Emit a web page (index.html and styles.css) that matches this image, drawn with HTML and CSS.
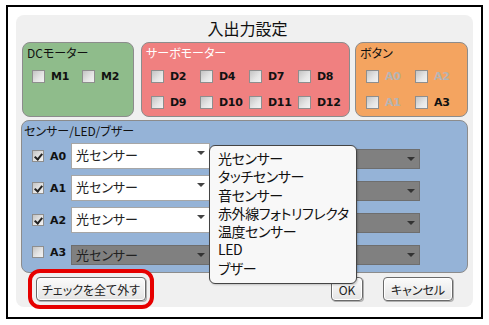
FILE: index.html
```html
<!DOCTYPE html>
<html lang="ja">
<head>
    <meta charset="UTF-8">
    <title>入出力設定</title>
    <link rel="stylesheet" href="styles.css">
</head>
<body>
    <div class="frame">
        <div class="panel">
            <h1 class="title">入出力設定</h1>

            <div class="groups">
                <section class="group group-dc">
                    <div class="group-title">DCモーター</div>
                    <div class="checks">
                        <label class="chk"><span class="box"></span>M1</label>
                        <label class="chk"><span class="box"></span>M2</label>
                    </div>
                </section>

                <section class="group group-servo">
                    <div class="group-title light">サーボモーター</div>
                    <div class="checks">
                        <label class="chk"><span class="box"></span>D2</label>
                        <label class="chk"><span class="box"></span>D4</label>
                        <label class="chk"><span class="box"></span>D7</label>
                        <label class="chk"><span class="box"></span>D8</label>
                        <label class="chk"><span class="box"></span>D9</label>
                        <label class="chk"><span class="box"></span>D10</label>
                        <label class="chk"><span class="box"></span>D11</label>
                        <label class="chk"><span class="box"></span>D12</label>
                    </div>
                </section>

                <section class="group group-button">
                    <div class="group-title">ボタン</div>
                    <div class="checks">
                        <label class="chk disabled"><span class="box"></span>A0</label>
                        <label class="chk disabled"><span class="box"></span>A2</label>
                        <label class="chk disabled"><span class="box"></span>A1</label>
                        <label class="chk"><span class="box"></span>A3</label>
                    </div>
                </section>
            </div>

            <section class="sensors">
                <div class="group-title">センサー/LED/ブザー</div>

                <div class="sensor-row">
                    <span class="box checked"></span>
                    <span class="pin">A0</span>
                    <div class="select open">光センサー<span class="arrow"></span></div>
                    <div class="select off wide"><span class="arrow"></span></div>
                </div>
                <div class="sensor-row">
                    <span class="box checked"></span>
                    <span class="pin">A1</span>
                    <div class="select open">光センサー<span class="arrow"></span></div>
                    <div class="select off wide"><span class="arrow"></span></div>
                </div>
                <div class="sensor-row">
                    <span class="box checked"></span>
                    <span class="pin">A2</span>
                    <div class="select open">光センサー<span class="arrow"></span></div>
                    <div class="select off wide"><span class="arrow"></span></div>
                </div>
                <div class="sensor-row">
                    <span class="box"></span>
                    <span class="pin">A3</span>
                    <div class="select off">光センサー<span class="arrow"></span></div>
                    <div class="select off wide"><span class="arrow"></span></div>
                </div>
            </section>

            <div class="actions">
                <button class="btn btn-clear">チェックを全て外す</button>
                <button class="btn btn-ok">OK</button>
                <button class="btn btn-cancel">キャンセル</button>
            </div>

            <!-- open list of the A0 select -->
            <ul class="dropdown">
                <li>光センサー</li>
                <li>タッチセンサー</li>
                <li>音センサー</li>
                <li>赤外線フォトリフレクタ</li>
                <li>温度センサー</li>
                <li>LED</li>
                <li>ブザー</li>
            </ul>
        </div>
    </div>
</body>
</html>
```

FILE: styles.css
```css
:root {
    --panel-bg: #f0f0f0;
    --dc-color: #8fbc8b;
    --servo-color: #f08080;
    --button-color: #f4a460;
    --sensor-color: #95b3d7;
    --group-border: #8c8c8c;
    --text-color: #111;
}

* {
    box-sizing: border-box;
}

body {
    margin: 0;
    background: #fff;
    font-family: "Noto Sans CJK JP", "DejaVu Sans", sans-serif;
    font-feature-settings: "palt";
    color: var(--text-color);
}

.frame {
    width: 477px;
    height: 314px;
    margin: 5px 0 0 6px;
    border: 2px solid #000;
    padding: 8px 0 0 8px;
}

.panel {
    position: relative;
    width: 457px;
    height: 292px;
    background: var(--panel-bg);
    border-radius: 8px;
}

.title {
    margin: 0;
    padding-top: 3px;
    padding-left: 6px;
    height: 27px;
    font-size: 16px;
    line-height: 20px;
    font-weight: normal;
    text-align: center;
}

/* top row of groups */
.groups {
    display: flex;
    padding-left: 6px;
}

.group {
    height: 75px;
    border: 1px solid var(--group-border);
    border-radius: 8px;
}

.group-dc {
    width: 112px;
    background: var(--dc-color);
}

.group-servo {
    width: 209px;
    margin-left: 7px;
    background: var(--servo-color);
}

.group-button {
    width: 113px;
    margin-left: 5px;
    background: var(--button-color);
}

.group-title {
    padding: 2px 0 0 4px;
    font-size: 12px;
    line-height: 16px;
    height: 18px;
}

.group-title.light {
    color: #fff;
}

.checks {
    display: grid;
    grid-template-columns: repeat(4, 49px);
    row-gap: 10px;
    padding: 7px 0 0 9px;
}

.group-dc .checks {
    grid-template-columns: repeat(2, 50px);
}

.group-button .checks {
    grid-template-columns: repeat(2, 49px);
    padding-left: 10px;
}

.chk {
    display: flex;
    align-items: center;
    height: 16px;
    font-family: "DejaVu Sans", sans-serif;
    font-weight: bold;
    font-size: 11px;
    letter-spacing: -0.3px;
}

.chk.disabled {
    color: #b4b4b4;
}

.box {
    flex: none;
    width: 13px;
    height: 13px;
    margin-right: 6px;
    border: 1px solid #8e8e8e;
    background: linear-gradient(135deg, #c4c4c4 0%, #e6e6e6 60%, #f2f2f2 100%);
    position: relative;
}

.box.checked::after {
    content: "";
    position: absolute;
    left: 3px;
    top: 1px;
    width: 3px;
    height: 6px;
    border: solid #222;
    border-width: 0 2px 2px 0;
    transform: rotate(40deg);
}

/* sensor block */
.sensors {
    width: 447px;
    height: 153px;
    margin: 3px 0 0 5px;
    background: var(--sensor-color);
    border: 1px solid var(--group-border);
    border-radius: 8px;
}

.sensors .group-title {
    padding-left: 2px;
    height: 22px;
}

.sensor-row {
    display: flex;
    align-items: center;
    height: 26px;
    margin-bottom: 6px;
    padding-left: 10px;
}

.sensor-row .box {
    width: 12px;
    height: 12px;
    margin-right: 6px;
}

.pin {
    width: 21px;
    font-family: "DejaVu Sans", sans-serif;
    font-weight: bold;
    font-size: 11px;
}

.select {
    position: relative;
    width: 139px;
    font-size: 13px;
    line-height: 16px;
    padding: 3px 0 0 4px;
    color: #222;
}

.select.open {
    height: 26px;
    background: #fff;
    border: 1px solid #a6a6a6;
}

.select.off {
    height: 20px;
    align-self: flex-end;
    padding-top: 1px;
    background: #808080;
    border: 1px solid #6e6e6e;
}

.select.wide {
    width: 206px;
    margin-left: 4px;
}

.arrow {
    position: absolute;
    right: 4px;
    top: 7px;
    border: 4px solid transparent;
    border-top: 4px solid #444;
    border-bottom: 0;
}

.select.off .arrow {
    border-top-color: #333;
}

/* bottom buttons */
.actions {
    display: flex;
    margin-top: 4px;
    padding: 0 20px;
}

.btn {
    height: 24px;
    padding: 0;
    font-family: "Noto Sans CJK JP", sans-serif;
    font-feature-settings: "palt";
    font-size: 12px;
    color: #222;
    background: linear-gradient(#fbfbfb, #e4e4e4);
    border: 1px solid #6a6a6a;
    border-radius: 4px;
    box-shadow: inset 0 0 0 1px #fff, 1px 1px 0 #b0b0b0;
}

.btn-clear {
    width: 110px;
    outline: 4px solid #e60000;
    outline-offset: 4px;
}

.btn-ok {
    width: 32px;
    margin-left: auto;
}

.btn-cancel {
    width: 70px;
    margin-left: 20px;
}

/* opened list */
.dropdown {
    position: absolute;
    left: 193px;
    top: 130px;
    width: 148px;
    height: 139px;
    margin: 0;
    padding: 3px 0 0 8px;
    list-style: none;
    background: #f8f8f8;
    border: 1px solid #444;
    border-radius: 6px;
    box-shadow: 1px 1px 2px rgba(0, 0, 0, 0.2);
}

.dropdown li {
    height: 18.3px;
    font-size: 14px;
    line-height: 18px;
    letter-spacing: -0.4px;
    white-space: nowrap;
}
```
